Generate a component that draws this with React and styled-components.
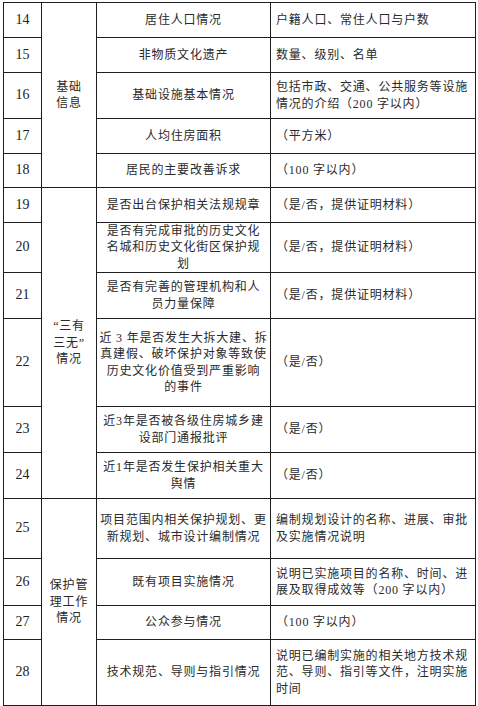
import React from "react";
import styled, { createGlobalStyle } from "styled-components";

const Global = createGlobalStyle`
  html, body { margin: 0; padding: 0; background: #fff; }
  body { font-family: "Liberation Serif", "Noto Sans CJK SC", serif; color: #222; }
`;

const Page = styled.div`
  padding: 2px 0 0 3px;
`;

const Grid = styled.div`
  display: grid;
  width: max-content;
  grid-template-columns: 37px 54px 173px 204px;
  grid-template-rows: ${(p) => p.$rows.map((h) => `${h}px`).join(" ")};
  gap: 1px;
  padding: 1px;
  background: #1e1e1e;
`;

const Cell = styled.div`
  background: #fff;
  display: flex;
  flex-direction: column;
  justify-content: center;
  align-items: ${(p) => (p.$left ? "flex-start" : "center")};
  padding: ${(p) => (p.$left ? "0 0 0 5px" : "0")};
  font-size: 12px;
  letter-spacing: 0.8px;
  line-height: 16.5px;
  font-family: "Liberation Serif", "Noto Sans CJK SC", serif;
  color: #2a2a2a;
  grid-row: ${(p) => p.$row};
  grid-column: ${(p) => p.$col};
`;

const Num = styled(Cell)`
  font-size: 14px;
  letter-spacing: 0;
  color: #222;
`;

const Group = styled(Cell)`
  text-align: center;
`;

const Line = styled.span`
  white-space: nowrap;
  display: block;
  text-align: ${(p) => (p.$left ? "left" : "center")};
`;

const rows = [
  { n: 14, h: 35, item: ["居住人口情况"], desc: ["户籍人口、常住人口与户数"] },
  { n: 15, h: 35, item: ["非物质文化遗产"], desc: ["数量、级别、名单"] },
  { n: 16, h: 46, item: ["基础设施基本情况"], desc: ["包括市政、交通、公共服务等设施", "情况的介绍（200 字以内）"] },
  { n: 17, h: 35, item: ["人均住房面积"], desc: ["（平方米）"] },
  { n: 18, h: 34, item: ["居民的主要改善诉求"], desc: ["（100 字以内）"] },
  { n: 19, h: 35, item: ["是否出台保护相关法规规章"], desc: ["（是/否，提供证明材料）"] },
  { n: 20, h: 50, item: ["是否有完成审批的历史文化", "名城和历史文化街区保护规", "划"], desc: ["（是/否，提供证明材料）"] },
  { n: 21, h: 46, item: ["是否有完善的管理机构和人", "员力量保障"], desc: ["（是/否，提供证明材料）"] },
  { n: 22, h: 88, item: ["近 3 年是否发生大拆大建、拆", "真建假、破坏保护对象等致使", "历史文化价值受到严重影响", "的事件"], desc: ["（是/否）"] },
  { n: 23, h: 46, item: ["近3年是否被各级住房城乡建", "设部门通报批评"], desc: ["（是/否）"] },
  { n: 24, h: 46, item: ["近1年是否发生保护相关重大", "舆情"], desc: ["（是/否）"] },
  { n: 25, h: 60, item: ["项目范围内相关保护规划、更", "新规划、城市设计编制情况"], desc: ["编制规划设计的名称、进展、审批", "及实施情况说明"] },
  { n: 26, h: 47, item: ["既有项目实施情况"], desc: ["说明已实施项目的名称、时间、进", "展及取得成效等（200 字以内）"] },
  { n: 27, h: 34, item: ["公众参与情况"], desc: ["（100 字以内）"] },
  { n: 28, h: 66, item: ["技术规范、导则与指引情况"], desc: ["说明已编制实施的相关地方技术规", "范、导则、指引等文件，注明实施", "时间"] },
];

const groups = [
  { from: 1, span: 5, lines: ["基础", "信息"] },
  { from: 6, span: 6, lines: ["“三有", "三无”", "情况"] },
  { from: 12, span: 4, lines: ["保护管", "理工作", "情况"] },
];

export default function App() {
  return (
    <Page>
      <Global />
      <Grid $rows={rows.map((r) => r.h - 1)}>
        {rows.map((r, i) => (
          <React.Fragment key={r.n}>
            <Num $row={i + 1} $col={1}>{r.n}</Num>
            <Cell $row={i + 1} $col={3}>
              {r.item.map((t, k) => (
                <Line key={k}>{t}</Line>
              ))}
            </Cell>
            <Cell $row={i + 1} $col={4} $left>
              {r.desc.map((t, k) => (
                <Line key={k} $left>{t}</Line>
              ))}
            </Cell>
          </React.Fragment>
        ))}
        {groups.map((g) => (
          <Group key={g.from} $row={`${g.from} / span ${g.span}`} $col={2}>
            {g.lines.map((t, k) => (
              <Line key={k}>{t}</Line>
            ))}
          </Group>
        ))}
      </Grid>
    </Page>
  );
}
